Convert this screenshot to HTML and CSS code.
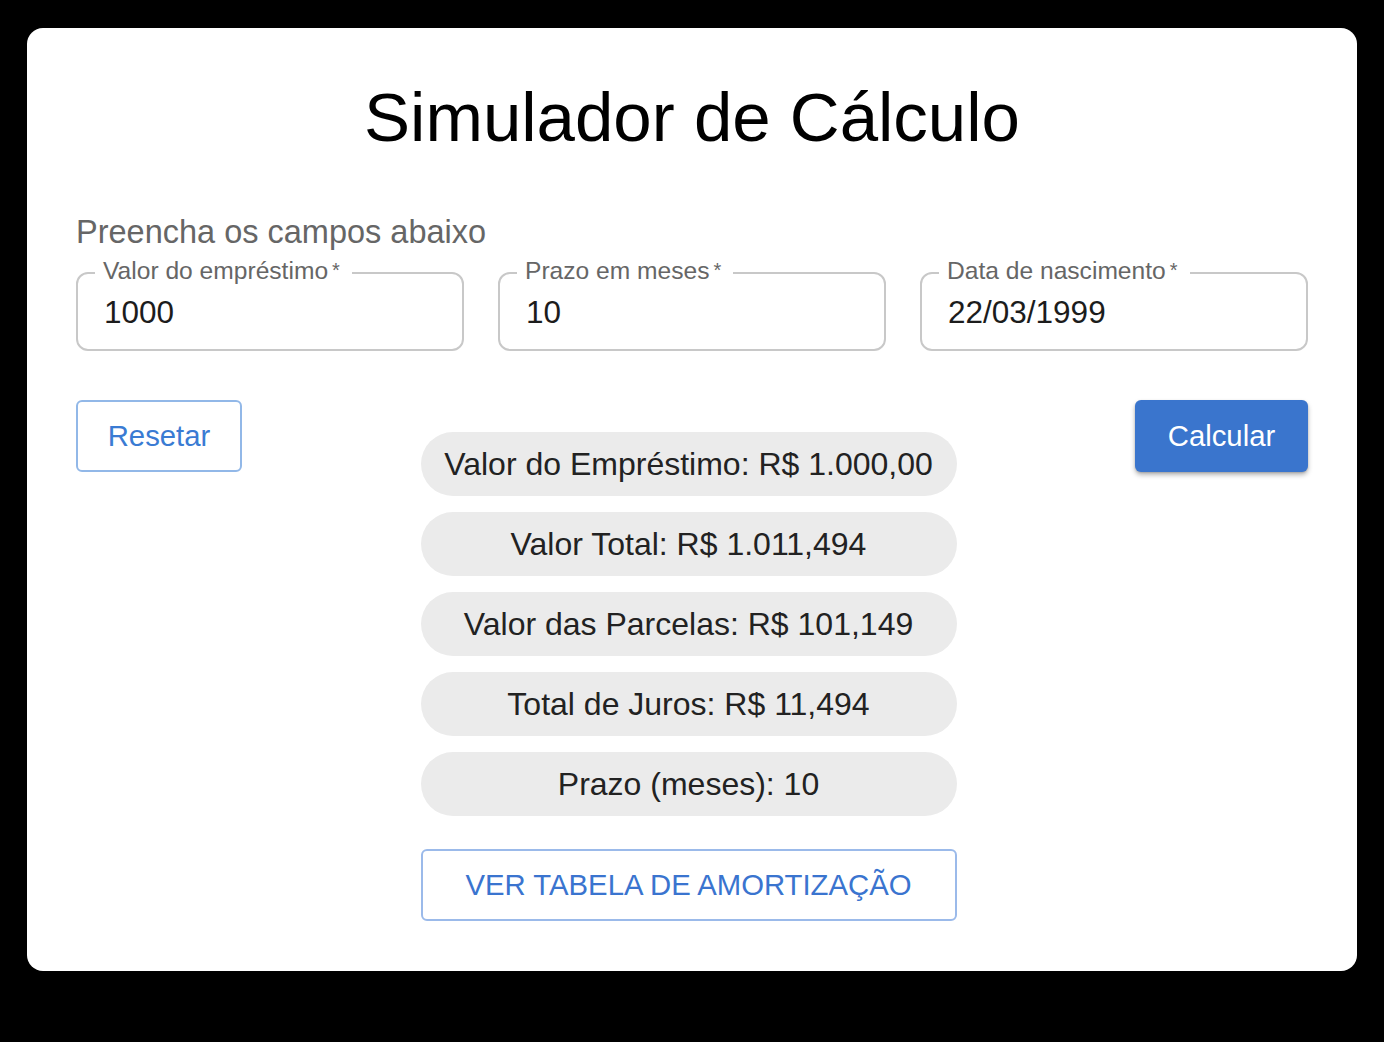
FILE: index.html
```html
<!DOCTYPE html>
<html lang="pt-BR">
<head>
<meta charset="utf-8">
<title>Simulador de Cálculo</title>
<link rel="stylesheet" href="styles.css">
</head>
<body>
<main class="card">
  <h1 class="title">Simulador de Cálculo</h1>
  <p class="subtitle">Preencha os campos abaixo</p>
  <div class="fields">
    <label class="field">
      <span class="field-label">Valor do empréstimo<span class="req">&thinsp;*</span></span>
      <input class="field-input" type="text" value="1000">
    </label>
    <label class="field">
      <span class="field-label">Prazo em meses<span class="req">&thinsp;*</span></span>
      <input class="field-input" type="text" value="10">
    </label>
    <label class="field">
      <span class="field-label">Data de nascimento<span class="req">&thinsp;*</span></span>
      <input class="field-input" type="text" value="22/03/1999">
    </label>
  </div>
  <div class="actions">
    <button class="btn btn-outline btn-reset" type="button">Resetar</button>
    <div class="results">
      <div class="chip">Valor do Empréstimo: R$ 1.000,00</div>
      <div class="chip">Valor Total: R$ 1.011,494</div>
      <div class="chip">Valor das Parcelas: R$ 101,149</div>
      <div class="chip">Total de Juros: R$ 11,494</div>
      <div class="chip">Prazo (meses): 10</div>
      <button class="btn btn-outline btn-table" type="button">VER TABELA DE AMORTIZAÇÃO</button>
    </div>
    <button class="btn btn-primary" type="button">Calcular</button>
  </div>
</main>
</body>
</html>
```

FILE: styles.css
```css
html, body {
  margin: 0;
  padding: 0;
  background: #000;
}

body {
  padding: 28px 27px;
  font-family: "Liberation Sans", Arial, Helvetica, sans-serif;
}

.card {
  box-sizing: border-box;
  height: 943px;
  background: #fff;
  border-radius: 16px;
  padding: 48px 49px 51px;
}

.title {
  margin: 0;
  font-size: 69px;
  line-height: 83px;
  font-weight: 400;
  text-align: center;
  color: #000;
}

.subtitle {
  margin: 49px 0 0;
  font-size: 32.5px;
  line-height: 48px;
  color: #666;
}

.fields {
  margin-top: 16px;
  display: grid;
  grid-template-columns: repeat(3, 1fr);
  gap: 34px;
}

.field {
  position: relative;
  display: block;
  box-sizing: border-box;
  height: 79px;
  border: 2px solid #c8c8c8;
  border-radius: 12px;
}

.field-label {
  position: absolute;
  top: -15px;
  left: 17px;
  padding: 0 12px 0 8px;
  background: #fff;
  font-size: 24.6px;
  line-height: 24px;
  color: #666;
  white-space: nowrap;
}

.req {
  font-size: 20px;
  position: relative;
  top: -2px;
}

.field-input {
  box-sizing: border-box;
  display: block;
  width: 100%;
  height: 100%;
  border: 0;
  outline: none;
  background: transparent;
  padding: 2px 26px 0 26px;
  font-family: "Liberation Sans", Arial, Helvetica, sans-serif;
  font-size: 31.5px;
  color: #1c1c1c;
}

.actions {
  margin-top: 49px;
  display: flex;
  justify-content: space-between;
  align-items: flex-start;
}

.btn {
  box-sizing: border-box;
  height: 72px;
  border-radius: 6px;
  font-family: "Liberation Sans", Arial, Helvetica, sans-serif;
  font-size: 29.3px;
  cursor: pointer;
  padding: 0;
}

.btn-outline {
  background: #fff;
  border: 2px solid #92b8e8;
  color: #3a7bd3;
}

.btn-reset {
  width: 166px;
}

.btn-primary {
  width: 173px;
  background: #3a75cd;
  border: 0;
  color: #fff;
  box-shadow: 0 3px 5px rgba(0, 0, 0, 0.28), 0 1px 2px rgba(0, 0, 0, 0.15);
}

.results {
  width: 536px;
  padding-top: 32px;
  display: flex;
  flex-direction: column;
  gap: 16px;
}

.chip {
  height: 64px;
  border-radius: 32px;
  background: #ebebeb;
  display: flex;
  align-items: center;
  justify-content: center;
  font-size: 32px;
  color: #222;
  white-space: nowrap;
}

.btn-table {
  width: 100%;
  margin-top: 17px;
  color: #3a74cf;
  border-color: #9bbaea;
}
```
